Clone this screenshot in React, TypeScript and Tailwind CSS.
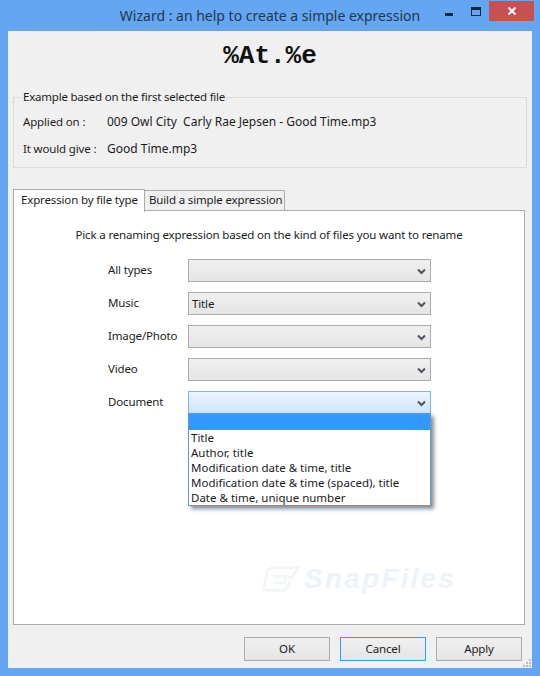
const rows = [
  { label: 'All types', value: '' },
  { label: 'Music', value: 'Title' },
  { label: 'Image/Photo', value: '' },
  { label: 'Video', value: '' },
  { label: 'Document', value: '', open: true },
];

const options = [
  'Title',
  'Author, title',
  'Modification date & time, title',
  'Modification date & time (spaced), title',
  'Date & time, unique number',
];

const Chevron = () => (
  <svg width="9" height="7" viewBox="0 0 9 7" className="absolute right-[4px] top-[8px]">
    <path d="M1 1.5 L4.5 5 L8 1.5" fill="none" stroke="#4d5560" strokeWidth="2" />
  </svg>
);

const Combo = ({ value, open }: { value: string; open?: boolean }) => (
  <div
    className={
      open
        ? 'relative h-[23px] w-[243px] border border-[#7eb4ea] bg-gradient-to-b from-[#ecf4fc] to-[#cde5fb] pl-[3px] leading-[21px]'
        : 'relative h-[23px] w-[243px] border border-[#acacac] bg-gradient-to-b from-[#f0f0f0] to-[#e5e5e5] pl-[3px] leading-[21px]'
    }
  >
    {value}
    <Chevron />
    {open && (
      <div className="absolute left-[-1px] top-[21px] z-10 h-[93px] w-[243px] border border-[#5a9bd8] bg-white tracking-normal shadow-[3px_3px_4px_rgba(0,0,0,0.45)]">
        <div className="h-[16px] bg-[#3399ff]" />
        {options.map((o) => (
          <div key={o} className="h-[15px] whitespace-nowrap pl-[2px] leading-[15px] text-[#1a1a1a]">
            {o}
          </div>
        ))}
      </div>
    )}
  </div>
);

const Button = ({ label, focused }: { label: string; focused?: boolean }) => (
  <div
    className={
      focused
        ? 'flex h-[24px] w-[86px] items-center justify-center border border-[#3d9be0] bg-gradient-to-b from-[#f0f0f0] to-[#e5e5e5]'
        : 'flex h-[24px] w-[86px] items-center justify-center border border-[#acacac] bg-gradient-to-b from-[#f0f0f0] to-[#e5e5e5]'
    }
  >
    {label}
  </div>
);

export default function App() {
  return (
    <div className="flex h-[676px] w-[540px] flex-col overflow-hidden bg-[#64a6f2] font-['Noto_Sans',sans-serif] text-[11.5px] tracking-[-0.15px] text-[#1c1c1c]">
      {/* title bar */}
      <div className="relative h-[31px] shrink-0">
        <div className="pt-[5px] text-center text-[14px] leading-[22px] tracking-normal text-[#22364f]">
          Wizard : an help to create a simple expression
        </div>
        <div className="absolute left-[445px] top-[13px] h-[3px] w-[8px] bg-[#16283f]" />
        <div className="absolute left-[471px] top-[7px] h-[9px] w-[10px] border border-t-[3px] border-[#16283f]" />
        <div className="absolute left-[489px] top-[1px] flex h-[20px] w-[45px] items-center justify-center bg-[#c75050]">
          <svg width="10" height="10" viewBox="0 0 10 10">
            <path d="M1.5 1.5 L8.5 8.5 M8.5 1.5 L1.5 8.5" stroke="#fff" strokeWidth="2" />
          </svg>
        </div>
      </div>

      {/* window body */}
      <div className="relative mx-[8px] h-[637px] bg-[#f0f0f0]">
        <div className="pt-[10px] text-center font-['Liberation_Mono',monospace] text-[26px] font-bold leading-[30px] tracking-normal text-[#111]">
          %At.%e
        </div>

        {/* example group */}
        <div className="relative mx-[5px] mt-[26px] h-[71px] border border-[#dcdcdc]">
          <span className="absolute left-[8px] top-[-10px] bg-[#f0f0f0] px-[1px] leading-[18px] tracking-[-0.22px]">
            Example based on the first selected file
          </span>
          <div className="flex pl-[9px] pt-[15px] leading-[18px]">
            <span className="w-[84px]">Applied on :</span>
            <span className="whitespace-pre text-[12px] tracking-normal">009 Owl City  Carly Rae Jepsen - Good Time.mp3</span>
          </div>
          <div className="flex pl-[9px] pt-[9px] leading-[18px]">
            <span className="w-[84px]">It would give :</span>
            <span className="text-[12px] tracking-normal">Good Time.mp3</span>
          </div>
        </div>

        {/* tabs */}
        <div className="mx-[5px] mt-[21px] flex items-end">
          <div className="relative z-10 mb-[-1px] h-[23px] w-[132px] whitespace-nowrap border border-b-0 border-[#acacac] bg-white pl-[7px] pt-[1px] leading-[18px]">
            Expression by file type
          </div>
          <div className="ml-[-1px] h-[21px] w-[141px] whitespace-nowrap border border-[#acacac] bg-[#f0f0f0] pl-[4px] leading-[18px]">
            Build a simple expression
          </div>
        </div>
        <div className="relative mx-[5px] mt-[-1px] h-[415px] w-[512px] border border-[#acacac] bg-white">
          <div className="pt-[15px] text-center leading-[18px]">
            Pick a renaming expression based on the kind of files you want to rename
          </div>
          <div className="mt-[15px] flex flex-col gap-[10px] pl-[94px]">
            {rows.map((r) => (
              <div key={r.label} className="flex">
                <span className="w-[80px] leading-[22px]">{r.label}</span>
                <Combo value={r.value} open={r.open} />
              </div>
            ))}
          </div>

          {/* watermark */}
          <div className="absolute left-[248px] top-[353px] flex items-center gap-[2px] opacity-50">
            <svg width="40" height="30" viewBox="0 0 42 30">
              <path d="M10 3 H38 L32 13 H14 M30 17 L24 27 H5 Q1 27 2 23 L5 9 Q6 3 12 3" fill="none" stroke="#e4f2ea" strokeWidth="3" />
              <path d="M12 12 H26 L24 19 H12" fill="none" stroke="#e4f2ea" strokeWidth="3" />
            </svg>
            <span className="font-['Liberation_Sans',sans-serif] text-[28px] font-bold italic leading-[28px] tracking-[2.2px] text-[#dce9f5]">
              SnapFiles
            </span>
          </div>
        </div>

        {/* buttons */}
        <div className="mt-[12px] flex justify-end gap-[10px] pr-[10px]">
          <Button label="OK" />
          <Button label="Cancel" focused />
          <Button label="Apply" />
        </div>
        <div className="absolute bottom-[1px] right-[1px] grid grid-cols-3 gap-[1px]">
          <i /> <i /> <b className="h-[2px] w-[2px] bg-[#bcbcbc]" />
          <i /> <b className="h-[2px] w-[2px] bg-[#bcbcbc]" /> <b className="h-[2px] w-[2px] bg-[#bcbcbc]" />
          <b className="h-[2px] w-[2px] bg-[#bcbcbc]" /> <b className="h-[2px] w-[2px] bg-[#bcbcbc]" /> <b className="h-[2px] w-[2px] bg-[#bcbcbc]" />
        </div>
      </div>
    </div>
  );
}
